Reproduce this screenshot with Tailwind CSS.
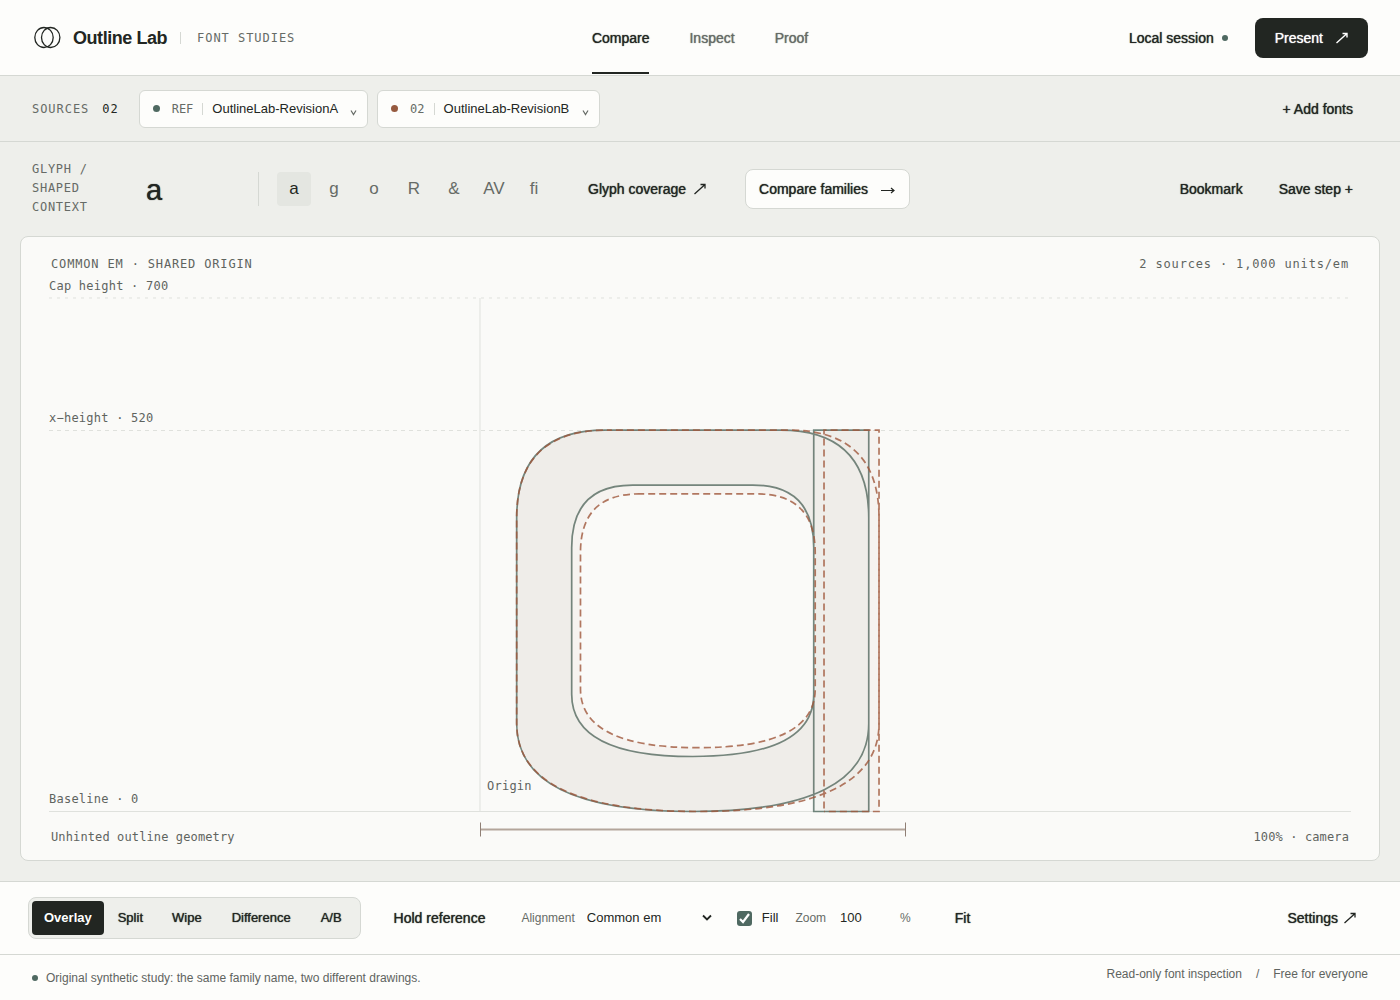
<!DOCTYPE html>
<html lang="en">
<head>
    <meta charset="UTF-8">
    <meta name="viewport" content="width=device-width, initial-scale=1.0">
    <title>Outline Lab</title>
    <script src="https://cdn.jsdelivr.net/npm/@tailwindcss/browser@4"></script>
</head>
<body class="min-h-screen flex flex-col bg-[#eeefeb] text-[#222622] text-sm font-['Liberation_Sans',Arial,sans-serif]">

    <!-- Header -->
    <header class="grid grid-cols-[1fr_auto_1fr] items-center h-19 px-8 bg-[#fdfdfb] border-b border-[#d5d8d3]">
        <div class="flex items-center">
            <svg class="w-8 h-6 mr-[9px]" viewBox="0 0 32 24" fill="none" stroke="currentColor" stroke-width="1.3" aria-hidden="true">
                <ellipse cx="12" cy="11.500" rx="9.200" ry="10"/>
                <ellipse cx="18.700" cy="11.500" rx="9.200" ry="10"/>
            </svg>
            <h1 class="text-lg font-bold tracking-tight">Outline Lab</h1>
            <span class="ml-[13px] pl-4 border-l border-[#d5d8d3] text-xs leading-3 tracking-[0.08em] text-[#666b66] font-['DejaVu_Sans_Mono',monospace]">FONT STUDIES</span>
        </div>
        <nav class="flex gap-10 h-full [text-shadow:0_0_1px_currentColor]">
            <a href="#" class="relative flex items-center">Compare<span class="absolute inset-x-0 bottom-px h-[2px] bg-[#222622]"></span></a>
            <a href="#" class="flex items-center text-[#666b66]">Inspect</a>
            <a href="#" class="flex items-center text-[#666b66]">Proof</a>
        </nav>
        <div class="flex items-center justify-end">
            <button class="flex items-center gap-2 [text-shadow:0_0_1px_currentColor]">Local session <span class="size-[6px] rounded-full bg-[#4f6961]"></span></button>
            <button class="flex items-center gap-[13px] h-10 ml-[27px] px-5 rounded-lg bg-[#222622] text-white [text-shadow:0_0_1px_currentColor]">
                Present
                <svg class="size-3" viewBox="0 0 12 12" fill="none" stroke="currentColor" stroke-width="1.400" aria-hidden="true"><path d="M.5 11L11 1.500M6.500 1.500H11v4"/></svg>
            </button>
        </div>
    </header>

    <!-- Sources -->
    <section class="flex items-center h-[66px] px-8 border-b border-[#d5d8d3]">
        <span class="text-xs tracking-[0.08em] text-[#666b66] font-['DejaVu_Sans_Mono',monospace]">SOURCES</span>
        <span class="ml-[13px] text-xs tracking-[0.08em] font-['DejaVu_Sans_Mono',monospace]">02</span>
        <button class="flex items-center h-[38px] ml-5 px-3 rounded-md bg-[#fdfdfb] border border-[#d5d8d3] text-[13px]">
            <span class="size-[7px] ml-px mr-3 rounded-full bg-[#4f6961]"></span>
            <span class="pr-[9px] mr-[9px] border-r border-[#d5d8d3] text-xs leading-3 text-[#666b66] font-['DejaVu_Sans_Mono',monospace]">REF</span>
            <span class="pt-px">OutlineLab-RevisionA</span>
            <svg class="w-2 h-2 ml-3 mt-2 -mr-[3px] text-[#666b66]" viewBox="0 0 8 8" fill="none" stroke="currentColor" stroke-width="1.200" aria-hidden="true"><path d="M1 1.500L3.500 5.500l2.500-4"/></svg>
        </button>
        <button class="flex items-center h-[38px] ml-[9px] px-3 rounded-md bg-[#fdfdfb] border border-[#d5d8d3] text-[13px]">
            <span class="size-[7px] ml-px mr-3 rounded-full bg-[#965a3f]"></span>
            <span class="pr-[9px] mr-[9px] border-r border-[#d5d8d3] text-xs leading-3 text-[#666b66] font-['DejaVu_Sans_Mono',monospace]">02</span>
            <span class="pt-px">OutlineLab-RevisionB</span>
            <svg class="w-2 h-2 ml-[13px] mt-2 -mr-[3px] text-[#666b66]" viewBox="0 0 8 8" fill="none" stroke="currentColor" stroke-width="1.200" aria-hidden="true"><path d="M1 1.500L3.500 5.500l2.500-4"/></svg>
        </button>
        <button class="ml-auto mr-[15px] [text-shadow:0_0_1px_currentColor]">+ Add fonts</button>
    </section>

    <!-- Glyph picker -->
    <section class="flex items-center h-[94px] px-8">
        <label for="glyph" class="w-20 pb-[2px] text-xs leading-[19px] tracking-[0.06em] text-[#666b66] font-['DejaVu_Sans_Mono',monospace]">GLYPH / SHAPED CONTEXT</label>
        <input id="glyph" type="text" value="a" class="w-28 ml-[34px] pt-[2px] text-[29px] leading-8 outline-none [text-shadow:0_0_1px_currentColor]">
        <div class="flex items-center gap-[6px] pl-[18px] border-l border-[#d5d8d3] text-[17px] text-[#666b66]">
            <button class="size-[34px] rounded-sm bg-[#e4e6e1] text-[#222622]">a</button>
            <button class="size-[34px]">g</button>
            <button class="size-[34px]">o</button>
            <button class="size-[34px]">R</button>
            <button class="size-[34px]">&amp;</button>
            <button class="size-[34px]">AV</button>
            <button class="size-[34px]">fi</button>
        </div>
        <button class="flex items-center gap-2 ml-[37px] [text-shadow:0_0_1px_currentColor]">
            Glyph coverage
            <svg class="size-3" viewBox="0 0 12 12" fill="none" stroke="currentColor" stroke-width="1.300" aria-hidden="true"><path d="M.5 11L11 1.500M6.500 1.500H11v4"/></svg>
        </button>
        <button class="flex items-center gap-3 h-10 ml-[39px] px-[13px] rounded-lg bg-[#fdfdfb] border border-[#d5d8d3] [text-shadow:0_0_1px_currentColor]">
            Compare families
            <svg class="w-4 h-3" viewBox="0 0 16 12" fill="none" stroke="currentColor" stroke-width="1.200" aria-hidden="true"><path d="M1 7.500h13M11 5l3 2.500-3 2.500"/></svg>
        </button>
        <button class="ml-auto [text-shadow:0_0_1px_currentColor]">Bookmark</button>
        <button class="ml-9 mr-[15px] [text-shadow:0_0_1px_currentColor]">Save step +</button>
    </section>

    <!-- Stage -->
    <main class="relative flex-1 mx-5 mb-5 rounded-lg bg-[#fafaf8] border border-[#d5d8d3] text-xs text-[#5f645f] font-['DejaVu_Sans_Mono',monospace]">
        <div class="absolute inset-x-[30px] top-[19px] flex justify-between tracking-[0.07em]">
            <span>COMMON EM · SHARED ORIGIN</span>
            <span>2 sources · 1,000 units/em</span>
        </div>
        <svg class="block w-full" viewBox="0 0 1358 623" fill="none" role="img" aria-label="Overlay of two outlines of the letter a">
            <g stroke="#dfe1dd">
                <path d="M28 61H1330" stroke-dasharray="3 5"/>
                <path d="M28 193.500H1330" stroke-dasharray="4 4"/>
                <path d="M28 574.500H1330M459 61v513"/>
            </g>
            <!-- Outlines are in font units, y up -->
            <g transform="translate(459 574.500) scale(.7335 -.7335)" stroke-width="1.7">
                <path fill="#526b62" fill-opacity=".045" stroke="#526b62" stroke-opacity=".8" vector-effect="non-scaling-stroke"
                    d="M170 520H410Q530 520 530 400V120Q530 0 290 0Q50 0 50 120V400Q50 520 170 520ZM208 445Q125 445 125 360V160Q125 75 290 75Q455 75 455 160V360Q455 445 372 445ZM455 0V520H530V0Z"/>
                <path fill="#a0583c" fill-opacity=".04"
                    d="M173 520H421Q544 520 544 400V120Q544 0 297 0Q50 0 50 120V400Q50 520 173 520ZM217 433Q137 433 137 353V167Q137 87 297 87Q457 87 457 167V353Q457 433 377 433ZM469 0V520H544V0Z"/>
                <g stroke="#a0583c" opacity=".8" stroke-dasharray="7 4">
                    <path stroke-dashoffset="2" vector-effect="non-scaling-stroke"
                        d="M173 520H421Q544 520 544 400V120Q544 0 297 0Q50 0 50 120V400Q50 520 173 520ZM217 433Q137 433 137 353V167Q137 87 297 87Q457 87 457 167V353Q457 433 377 433Z"/>
                    <path stroke-dashoffset="8" vector-effect="non-scaling-stroke" d="M469 0V520H544V0Z"/>
                </g>
            </g>
            <path d="M459.500 592.500H884.500" stroke="#b3a59b" stroke-width="2"/>
            <path d="M459.500 585.500v14M884.500 585.500v14" stroke="#8f7f75"/>
            <g class="fill-[#5f645f] text-xs tracking-[0.02em]">
                <text x="28" y="53">Cap height · 700</text>
                <text x="28" y="185">x−height · 520</text>
                <text x="28" y="566">Baseline · 0</text>
                <text x="466" y="553">Origin</text>
            </g>
        </svg>
        <div class="absolute inset-x-[30px] bottom-[15px] flex justify-between tracking-[0.01em]">
            <span>Unhinted outline geometry</span>
            <span>100% · camera</span>
        </div>
    </main>

    <!-- View controls -->
    <section class="flex items-center h-[74px] pl-7 pr-11 bg-[#fdfdfb] border-y border-[#d5d8d3]">
        <div class="flex p-[3px] rounded-lg bg-[#eeefeb] border border-[#d5d8d3] text-[13px]">
            <button class="h-[34px] px-3 pt-px rounded-sm bg-[#222622] text-white font-bold">Overlay</button>
            <button class="px-[14px] pt-px [text-shadow:0_0_1px_currentColor]">Split</button>
            <button class="px-[15px] pt-px [text-shadow:0_0_1px_currentColor]">Wipe</button>
            <button class="px-[15px] pt-px [text-shadow:0_0_1px_currentColor]">Difference</button>
            <button class="px-[15px] pt-px [text-shadow:0_0_1px_currentColor]">A/B</button>
        </div>
        <button class="ml-[33px] [text-shadow:0_0_1px_currentColor]">Hold reference</button>
        <label for="alignment" class="ml-9 text-xs text-[#666b66]">Alignment</label>
        <div class="relative flex items-center ml-3">
            <select id="alignment" class="w-[126px] pt-px appearance-none text-[13px] outline-none">
                <option>Common em</option>
            </select>
            <svg class="absolute right-0 w-3 h-2 pointer-events-none" viewBox="0 0 12 8" fill="none" stroke="currentColor" stroke-width="1.8" aria-hidden="true"><path d="M2 1.500l4 4 4-4"/></svg>
        </div>
        <label class="flex items-center gap-[10px] ml-6 text-[13px]">
            <span class="relative">
                <input type="checkbox" checked class="block size-[15px] appearance-none rounded-[3px] bg-[#4f6961]">
                <svg class="absolute inset-0 size-[15px] pointer-events-none" viewBox="0 0 15 15" fill="none" stroke="#fff" stroke-width="2.200" aria-hidden="true"><path d="M3 8l3 3 6-8"/></svg>
            </span>
            Fill
        </label>
        <label for="zoom" class="ml-[17px] text-xs text-[#666b66]">Zoom</label>
        <input id="zoom" type="text" value="100" class="w-15 ml-[14px] text-[13px] outline-none">
        <span class="text-xs text-[#666b66]">%</span>
        <button class="ml-11 [text-shadow:0_0_1px_currentColor]">Fit</button>
        <button class="flex items-center gap-[6px] ml-auto [text-shadow:0_0_1px_currentColor]">
            Settings
            <svg class="size-3" viewBox="0 0 12 12" fill="none" stroke="currentColor" stroke-width="1.300" aria-hidden="true"><path d="M.5 11L11 1.500M6.500 1.500H11v4"/></svg>
        </button>
    </section>

    <footer class="flex justify-between h-[45px] px-8 bg-[#fdfdfb] text-xs text-[#5f645f]">
        <p class="flex items-center gap-2"><span class="size-[6px] rounded-full bg-[#4f6961]"></span>Original synthetic study: the same family name, two different drawings.</p>
        <p class="flex gap-[14px] pt-[11px]"><span>Read-only font inspection</span><span>/</span><span>Free for everyone</span></p>
    </footer>

</body>
</html>
